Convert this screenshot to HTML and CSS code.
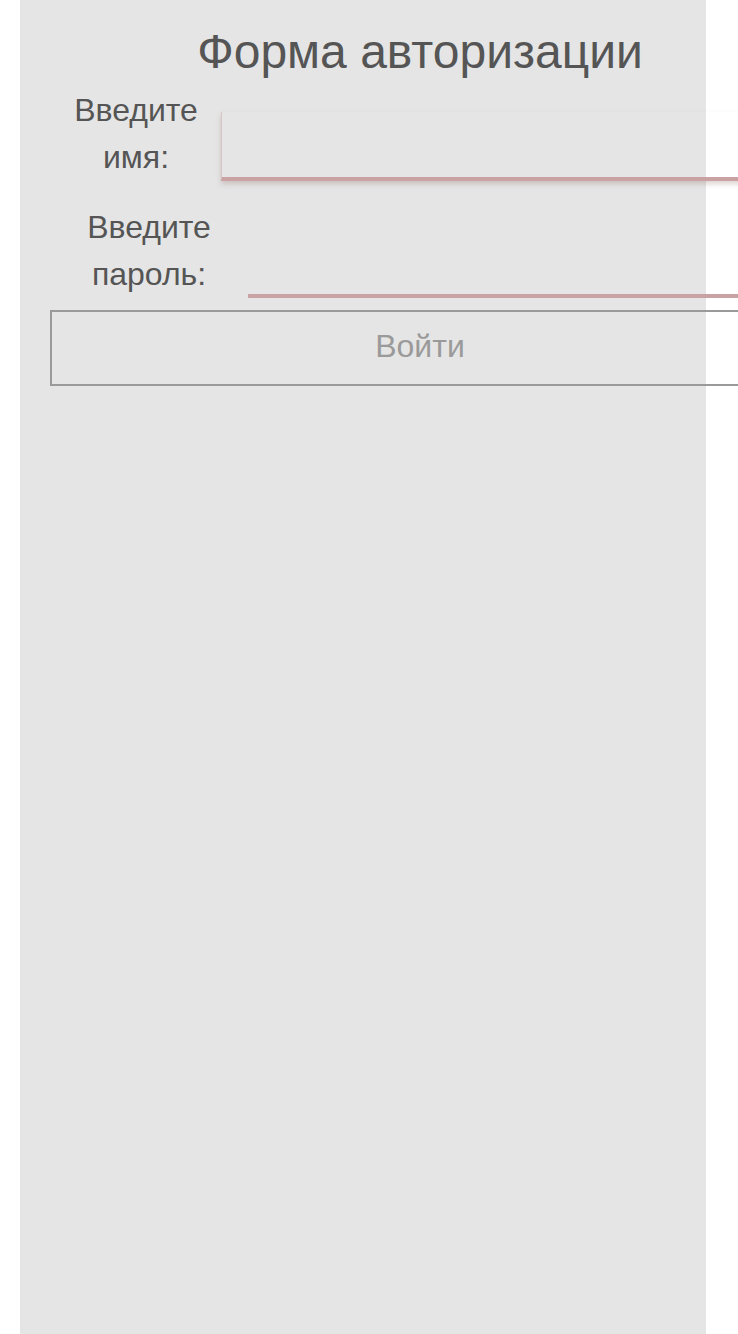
FILE: index.html
```html
<!DOCTYPE html>
<html lang="ru">
<head>
<meta charset="utf-8">
<title>Форма авторизации</title>
<link rel="stylesheet" href="styles.css">
</head>
<body>
<div class="panel">
  <form class="form">
    <h1 class="title">Форма авторизации</h1>
    <div class="row row-name">
      <label class="label" for="name">Введите имя:</label>
      <input class="field field-focus" id="name" type="text">
    </div>
    <div class="row row-pass">
      <label class="label" for="pass">Введите пароль:</label>
      <input class="field" id="pass" type="password">
    </div>
    <button class="btn" type="button">Войти</button>
  </form>
</div>
</body>
</html>
```
FILE: styles.css
```css
html { overflow-x: hidden; }
body {
  margin: 0;
  background: #ffffff;
  font-family: "Liberation Sans", Arial, sans-serif;
}
.panel {
  margin-left: 20px;
  width: 686px;
  min-height: 1334px;
  background: #e5e5e5;
  padding: 0 0 0 30px;
  box-sizing: border-box;
}
.form {
  width: 740px;
  display: flex;
  flex-direction: column;
}
.title {
  margin: 0;
  padding-top: 20px;
  height: 64px;
  line-height: 64px;
  font-size: 48px;
  font-weight: normal;
  color: #555555;
  text-align: center;
}
.row {
  display: flex;
  align-items: flex-end;
}
.row-name { margin-top: 3px; padding-left: 24px; gap: 23px; }
.row-pass { margin-top: 23px; padding-left: 37px; gap: 37px; }
.label {
  width: 124px;
  flex: none;
  font-size: 32px;
  line-height: 47px;
  color: #555555;
  text-align: center;
}
.field {
  flex: none;
  width: 560px;
  height: 69px;
  box-sizing: border-box;
  background: transparent;
  border: none;
  border-bottom: 4px solid #c9a3a3;
  outline: none;
  padding: 0 10px;
  font-size: 28px;
}
.field-focus {
  border-left: 1px solid rgba(201, 163, 163, 0.5);
  box-shadow: 0 3px 5px rgba(150, 110, 110, 0.3);
}
.btn {
  margin-top: 12px;
  height: 76px;
  width: 740px;
  box-sizing: border-box;
  padding: 0 0 4px;
  background: transparent;
  border: 2px solid #9a9a9a;
  color: #9a9a9a;
  font-family: "Liberation Sans", Arial, sans-serif;
  font-size: 32px;
}
```
